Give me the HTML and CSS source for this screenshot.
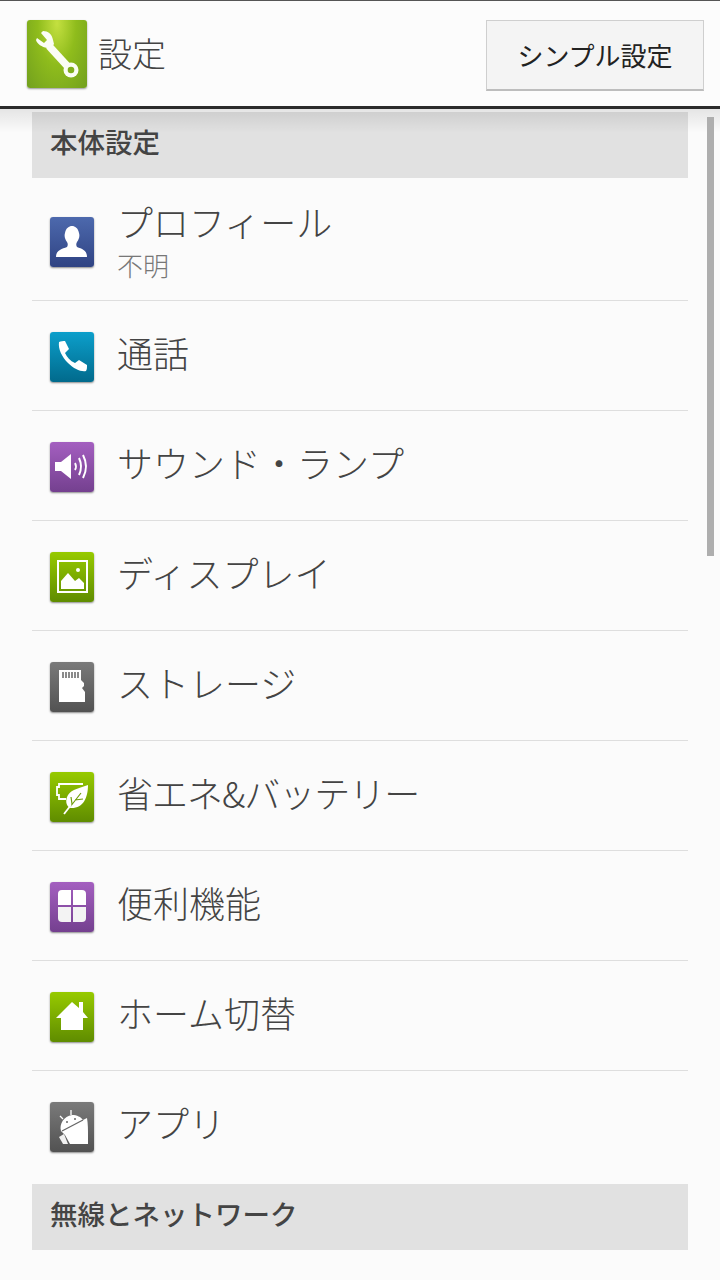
FILE: index.html
```html
<!DOCTYPE html>
<html lang="ja">
<head>
    <meta charset="UTF-8">
    <meta name="viewport" content="width=device-width, initial-scale=1.0">
    <title>設定</title>
    <link rel="stylesheet" href="styles.css">
</head>
<body>
    <header class="topbar">
        <div class="app-icon">
            <svg viewBox="0 0 60 68" width="60" height="68">
                <path d="M16 11 C21 11 25 14 26 20 L27 24 L23 30 L20 28 C15 27 10 24 9 20 L10 18 L17 23 L20 20 L14 13z" fill="#fbfdf5"/>
                <path d="M22 26 L43 49" stroke="#fbfdf5" stroke-width="7.500"/>
                <circle cx="44" cy="50" r="7.500" fill="#fbfdf5"/>
                <circle cx="44" cy="50" r="3.300" fill="#7fae1e"/>
            </svg>
        </div>
        <h1 class="title">設定</h1>
        <button class="simple-btn" type="button">シンプル設定</button>
    </header>

    <div class="top-shadow"></div>
    <div class="scrollbar"></div>

    <main class="list">
        <div class="section">本体設定</div>

        <div class="row row-profile">
            <div class="tile tile-blue">
                <svg viewBox="0 0 44 50" width="44" height="50">
                    <path d="M6 40 C6 33 12 32 17 30 C18 28 18 27 17 25 C15 22 14 19 15 16 C16 11 19 9 22 9 C25 9 28 11 29 16 C30 19 29 22 27 25 C26 27 26 28 27 30 C32 32 37 33 37 40z" fill="#fff"/>
                </svg>
            </div>
            <div class="row-text">
                <div class="row-label">プロフィール</div>
                <div class="row-sub">不明</div>
            </div>
        </div>

        <div class="row">
            <div class="tile tile-teal">
                <svg viewBox="0 0 44 50" width="44" height="50">
                    <path d="M9 10 C11 9 13 9 15 9 L19 17 L15 21 C17 25 20 29 25 31 L29 28 L37 33 C37 36 37 37 36 39 C31 40 24 37 18 31 C12 25 8 17 9 10z" fill="#fff"/>
                </svg>
            </div>
            <div class="row-label">通話</div>
        </div>

        <div class="row">
            <div class="tile tile-purple">
                <svg viewBox="0 0 44 50" width="44" height="50">
                    <path d="M5 20 H11 L21 12 V37 L11 29 H5z" fill="#fff"/>
                    <path d="M25 21 Q27 24.500 25 28" fill="none" stroke="#fff" stroke-width="1.800"/>
                    <path d="M29 16 Q33 24.500 29 33" fill="none" stroke="#fff" stroke-width="2"/>
                    <path d="M33 13 Q39 24.500 33 36" fill="none" stroke="#fff" stroke-width="2"/>
                </svg>
            </div>
            <div class="row-label">サウンド・ランプ</div>
        </div>

        <div class="row">
            <div class="tile tile-green">
                <svg viewBox="0 0 44 50" width="44" height="50">
                    <rect x="8" y="9" width="29" height="31" fill="none" stroke="#fff" stroke-width="2"/>
                    <path d="M11 37 V29 L18 21 L25 29 L29 26 L34 31 V37z" fill="#fff"/>
                    <circle cx="28" cy="18" r="2" fill="#fff"/>
                </svg>
            </div>
            <div class="row-label">ディスプレイ</div>
        </div>

        <div class="row">
            <div class="tile tile-gray">
                <svg viewBox="0 0 44 50" width="44" height="50">
                    <path d="M9 8 H31 V18 L34 21 V24 L32 26 L35 30 V40 H9z" fill="#fff"/>
                    <path d="M13 10 V16 M16 10 V16 M19 10 V16 M22 10 V16 M25 10 V16 M28 10 V16" stroke="#666" stroke-width="1.500"/>
                </svg>
            </div>
            <div class="row-label">ストレージ</div>
        </div>

        <div class="row">
            <div class="tile tile-green">
                <svg viewBox="0 0 44 50" width="44" height="50">
                    <path d="M16 27 H9 V23 H7 V15 H9 V12 H33" fill="none" stroke="#fff" stroke-width="1.800"/>
                    <path d="M38 13 C38 26 33 37 20 36 C16 34 15 28 18 23 C22 17 30 16 38 13z" fill="#fff"/>
                    <path d="M20 35 L31 21 M22 32 L21 25 M25 28 L33 27" fill="none" stroke="#6f9c08" stroke-width="1.200"/>
                    <path d="M14 42 L21 33" stroke="#fff" stroke-width="1.800"/>
                </svg>
            </div>
            <div class="row-label label-narrow">省エネ&amp;バッテリー</div>
        </div>

        <div class="row">
            <div class="tile tile-purple">
                <svg viewBox="0 0 44 50" width="44" height="50">
                    <path d="M12 8 H21 V23 H8 V12 Q8 8 12 8z" fill="#fff"/>
                    <path d="M23 8 H32 Q36 8 36 12 V23 H23z" fill="#fff"/>
                    <path d="M8 25 H21 V40 H12 Q8 40 8 36z" fill="#f3f3f3"/>
                    <path d="M23 25 H36 V36 Q36 40 32 40 H23z" fill="#f3f3f3"/>
                </svg>
            </div>
            <div class="row-label">便利機能</div>
        </div>

        <div class="row">
            <div class="tile tile-green">
                <svg viewBox="0 0 44 50" width="44" height="50">
                    <path d="M22 10 L29 16 V10 H33 V20 L38 26 H33 V38 H11 V26 H6z" fill="#fff"/>
                </svg>
            </div>
            <div class="row-label">ホーム切替</div>
        </div>

        <div class="row row-last">
            <div class="tile tile-gray">
                <svg viewBox="0 0 44 50" width="44" height="50">
                    <path d="M11 29 C9 22 14 14 22 13 C27 13 31 15 33 18 L37 16 C38 22 38 28 38 34 V42 H20 L15 33z" fill="#fff"/>
                    <path d="M9 35 L14 32 L18 42 H13z" fill="#f1f1f1"/>
                    <path d="M12 29 L33 18" stroke="#666" stroke-width="1.300"/>
                    <path d="M21 13 L21 8 M13 17 L10 14" stroke="#fff" stroke-width="1.300"/>
                    <circle cx="17" cy="20" r="1" fill="#666"/>
                    <circle cx="25" cy="17" r="1" fill="#666"/>
                </svg>
            </div>
            <div class="row-label">アプリ</div>
        </div>

        <div class="section">無線とネットワーク</div>
    </main>
</body>
</html>
```

FILE: styles.css
```css
body {
    margin: 0;
    height: 1280px;
    overflow: hidden;
    position: relative;
    background-color: #fbfbfb;
    color: #444;
    font-family: "Noto Sans CJK JP", "Noto Sans", sans-serif;
}

/* Top bar */
.topbar {
    box-sizing: border-box;
    height: 109px;
    display: flex;
    align-items: center;
    padding: 0 16px 0 27px;
    border-top: 1px solid #555;
    border-bottom: 3px solid #2b2b2b;
    background-color: #fcfcfc;
}

.app-icon {
    width: 60px;
    height: 68px;
    margin-top: 1px;
    border-radius: 3px;
    background: radial-gradient(ellipse at 50% 5%, #c4e040 0%, #8fbc1c 45%, #72a01e 100%);
    box-shadow: 0 1px 2px rgba(0, 0, 0, 0.4);
}

.app-icon svg {
    display: block;
}

.title {
    margin: 0 0 2px 11px;
    font-size: 34px;
    font-weight: 300;
    line-height: 1;
    color: #444;
    flex: 1;
}

.simple-btn {
    width: 218px;
    height: 71px;
    margin-top: 3px;
    padding: 0;
    font-family: inherit;
    font-size: 26px;
    font-weight: 400;
    color: #222;
    background-color: #f4f4f4;
    border: 1px solid #cfcfcf;
    border-bottom: 2px solid #bdbdbd;
}

/* Shadow under the bar and scrollbar lie over the list */
.top-shadow {
    position: absolute;
    top: 109px;
    left: 0;
    right: 0;
    height: 24px;
    background: linear-gradient(rgba(0, 0, 0, 0.09), rgba(0, 0, 0, 0));
}

.scrollbar {
    position: absolute;
    top: 117px;
    left: 707px;
    width: 7px;
    height: 439px;
    background-color: #aeaeae;
}

/* List */
.list {
    margin: 3px 32px 0;
}

.section {
    height: 66px;
    line-height: 58px;
    padding-left: 18px;
    font-size: 27.5px;
    font-weight: 500;
    color: #444;
    background-color: #e1e1e1;
}

.row {
    box-sizing: border-box;
    height: 110px;
    display: flex;
    align-items: center;
    padding: 2px 0 0 18px;
    border-bottom: 1px solid #dedede;
}

.row > .row-label {
    margin-bottom: 10px;
}

.row-profile {
    height: 123px;
    padding-top: 6px;
}

.row-text {
    margin-top: 2px;
}

.row-last {
    height: 113px;
    border-bottom: none;
    padding-bottom: 3px;
}

.tile {
    width: 44px;
    height: 50px;
    margin-right: 23px;
    flex: none;
    border-radius: 3px;
    box-shadow: 0 1px 2px rgba(0, 0, 0, 0.45);
}

.tile svg {
    display: block;
}

.tile-blue { background: linear-gradient(#4d69ad, #2f4383); }
.tile-teal { background: linear-gradient(#0c9fcb, #016a8c); }
.tile-purple { background: linear-gradient(#a45fc0, #74408f); }
.tile-green { background: linear-gradient(#97ca00, #5f8c00); }
.tile-gray { background: linear-gradient(#7a7a7a, #525252); }

.row-label {
    font-size: 36px;
    font-weight: 300;
    line-height: 44px;
    color: #444;
    white-space: nowrap;
}

.label-narrow {
    letter-spacing: -1px;
}

.row-sub {
    font-size: 26px;
    font-weight: 300;
    line-height: 44px;
    color: #777;
}
```
